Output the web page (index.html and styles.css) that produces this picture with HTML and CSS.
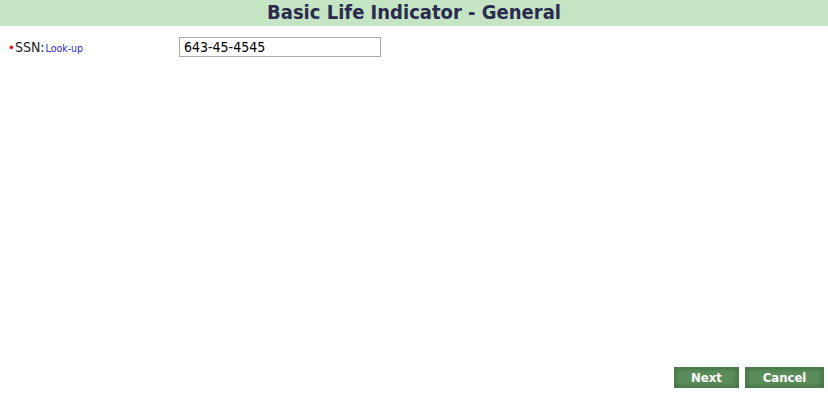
FILE: index.html
```html
<!DOCTYPE html>
<html>
<head>
<meta charset="utf-8">
<link rel="stylesheet" href="styles.css">
</head>
<body>
<div class="page">
  <div class="header">Basic Life Indicator - General</div>
  <div class="row">
    <div class="label"><span class="req">&bull;</span>SSN:<a class="lookup">Look-up</a></div>
    <input class="field" type="text" value="643-45-4545">
  </div>
  <div class="spacer"></div>
  <div class="buttons">
    <button class="btn next">Next</button>
    <button class="btn cancel">Cancel</button>
  </div>
</div>
</body>
</html>
```
FILE: styles.css
```css
html, body {
  margin: 0;
  padding: 0;
  background: #fff;
}
.page {
  width: 828px;
  height: 409px;
  display: flex;
  flex-direction: column;
  font-family: "DejaVu Sans Condensed", "DejaVu Sans", sans-serif;
}
.header {
  height: 26px;
  background: #c4e4c4;
  color: #2b2b4f;
  font-weight: bold;
  font-size: 20px;
  line-height: 25px;
  text-align: center;
}
.row {
  display: flex;
  align-items: center;
  margin-top: 11px;
  height: 20px;
}
.label {
  width: 171px;
  padding-left: 8px;
  font-size: 14px;
  color: #222;
}
.req {
  color: #e00;
  font-size: 13px;
}
.lookup {
  color: #2a2ae0;
  font-size: 10.5px;
  margin-left: 1px;
}
.field {
  box-sizing: border-box;
  width: 202px;
  height: 20px;
  margin: 0;
  border: 1px solid #a9a9a9;
  padding: 0 4px;
  font-family: "DejaVu Sans Condensed", "DejaVu Sans", sans-serif;
  font-size: 14px;
  color: #000;
}
.spacer {
  flex: 1;
}
.buttons {
  display: flex;
  justify-content: flex-end;
  gap: 6px;
  padding-right: 4px;
  margin-bottom: 21px;
}
.btn {
  height: 21px;
  border: 1px solid #4d7c4d;
  background: #5b8d5b;
  box-shadow: inset 0 0 4px 1px #3f6e3f;
  color: #fff;
  font-family: "DejaVu Sans Condensed", "DejaVu Sans", sans-serif;
  font-weight: bold;
  font-size: 13px;
  padding: 0;
  cursor: pointer;
}
.next { width: 65px; }
.cancel { width: 79px; }
```
